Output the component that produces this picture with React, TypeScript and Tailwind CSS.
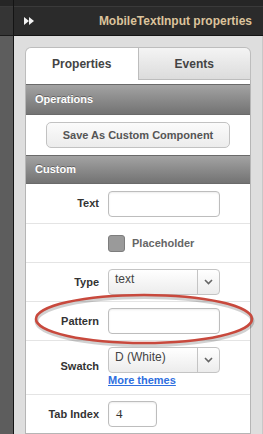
import React from "react";

function Chevron() {
  return (
    <svg width="9" height="6" viewBox="0 0 9 6" className="block">
      <polyline points="1,1 4.5,4.5 8,1" fill="none" stroke="#666" strokeWidth="1.6" />
    </svg>
  );
}

function Row({ label, children, tall }: { label?: string; children: React.ReactNode; tall?: boolean }) {
  return (
    <div className={`flex border-t border-[#e4e4e4] ${tall ? "h-[54px] pt-[6px]" : "h-[39px] items-center"}`}>
      <div className={`w-[73px] text-right text-[11px] font-bold text-[#333] ${tall ? "pt-[11px]" : ""}`}>{label}</div>
      <div className="ml-[9px]">{children}</div>
    </div>
  );
}

function TextBox({ w = 112, value }: { w?: number; value?: string }) {
  return (
    <div
      className="h-[26px] rounded-[4px] border border-[#bdbdbd] bg-white shadow-[inset_0_1px_2px_rgba(0,0,0,0.08)] flex items-center px-[7px] text-[13px] text-[#333]"
      style={{ width: w, fontFamily: '"Liberation Serif", serif' }}
    >
      {value}
    </div>
  );
}

function Select({ value }: { value: string }) {
  return (
    <div className="w-[112px] h-[26px] rounded-[4px] border border-[#c4c4c4] bg-gradient-to-b from-[#ffffff] to-[#ececec] flex">
      <div className="flex-1 pl-[6px] pt-[3px] text-[12px] text-[#444] leading-none">{value}</div>
      <div className="w-[22px] border-l border-[#c4c4c4] flex items-center justify-center">
        <Chevron />
      </div>
    </div>
  );
}

function SectionHead({ title, h }: { title: string; h: number }) {
  return (
    <div
      className="bg-gradient-to-b from-[#a3a3a3] to-[#737373] border-y border-[#6a6a6a] flex items-center pl-[9px] text-[11px] font-bold text-white [text-shadow:0_-1px_0_rgba(0,0,0,0.35)]"
      style={{ height: h }}
    >
      {title}
    </div>
  );
}

export default function App() {
  return (
    <div
      className="relative w-[263px] h-[434px] overflow-hidden flex bg-[#dedede]"
      style={{ fontFamily: '"Liberation Sans", Arial, sans-serif' }}
    >
      {/* left strip */}
      <div className="w-[14px] flex flex-col border-r border-[#141414]">
        <div className="h-[7px] bg-[#262626] border-b border-[#3a3a3a]" />
        <div className="h-[29px] bg-[#353535] border-b border-[#1a1a1a]" />
        <div className="flex-1 bg-[#5d5d5d]" />
      </div>

      <div className="flex-1 flex flex-col">
        {/* header */}
        <div className="h-[7px] bg-[#262626] border-b border-[#3a3a3a]" />
        <div className="h-[29px] bg-[#2b2b2b] border-b border-[#141414] flex items-center pl-[10px] pr-[11px]">
          <svg width="11" height="8" viewBox="0 0 11 8">
            <polygon points="0,0 5,4 0,8" fill="#f2f2f2" />
            <polygon points="5,0 10,4 5,8" fill="#f2f2f2" />
          </svg>
          <div className="ml-auto text-[12px] font-bold text-[#dcc39c]">MobileTextInput properties</div>
        </div>

        {/* body */}
        <div className="flex-1 pl-[11px] pr-[11px] pt-[11px] border-r border-[#c8c8c8]">
          <div className="flex h-[33px]">
            <div className="flex-1 bg-white rounded-tl-[6px] border border-b-0 border-[#bdbdbd] flex items-center justify-center text-[12px] font-bold text-[#444]">
              Properties
            </div>
            <div className="flex-1 rounded-tr-[6px] border border-l-0 border-[#bdbdbd] bg-gradient-to-b from-[#f4f4f4] to-[#dcdcdc] flex items-center justify-center text-[12px] font-bold text-[#444]">
              Events
            </div>
          </div>

          <div className="bg-white border-x border-b border-[#b5b5b5] pt-[4px] h-[354px]">
            <SectionHead title="Operations" h={31} />
            <div className="h-[40px] flex items-center justify-center">
              <div className="w-[184px] h-[26px] rounded-[5px] border border-[#c2c2c2] bg-gradient-to-b from-[#fbfbfb] to-[#ececec] flex items-center justify-center text-[11px] font-bold text-[#555]">
                Save As Custom Component
              </div>
            </div>
            <SectionHead title="Custom" h={29} />
            <div className="flex h-[39px] items-center">
              <div className="w-[73px] text-right text-[11px] font-bold text-[#333]">Text</div>
              <div className="ml-[9px]">
                <TextBox />
              </div>
            </div>
            <Row>
              <div className="flex items-center">
                <div className="w-[17px] h-[17px] rounded-[3px] bg-[#9a9a9a] border border-[#7d7d7d]" />
                <span className="ml-[7px] text-[11px] font-bold text-[#666]">Placeholder</span>
              </div>
            </Row>
            <Row label="Type">
              <Select value="text" />
            </Row>
            <Row label="Pattern">
              <TextBox />
            </Row>
            <Row label="Swatch" tall>
              <Select value="D (White)" />
              <div className="text-[11px] font-bold text-[#2f6fe0] underline leading-none mt-[2px]">More themes</div>
            </Row>
            <Row label="Tab Index">
              <TextBox w={49} value="4" />
            </Row>
          </div>
        </div>
      </div>

      {/* annotation ellipse */}
      <svg className="absolute left-0 top-0 pointer-events-none" width="263" height="434">
        <ellipse cx="144" cy="319.5" rx="108" ry="24" fill="none" stroke="rgba(0,0,0,0.18)" strokeWidth="4" transform="translate(0.5,1.5)" />
        <ellipse cx="144" cy="319" rx="108" ry="24" fill="none" stroke="#c8493d" strokeWidth="2.6" />
      </svg>
    </div>
  );
}
